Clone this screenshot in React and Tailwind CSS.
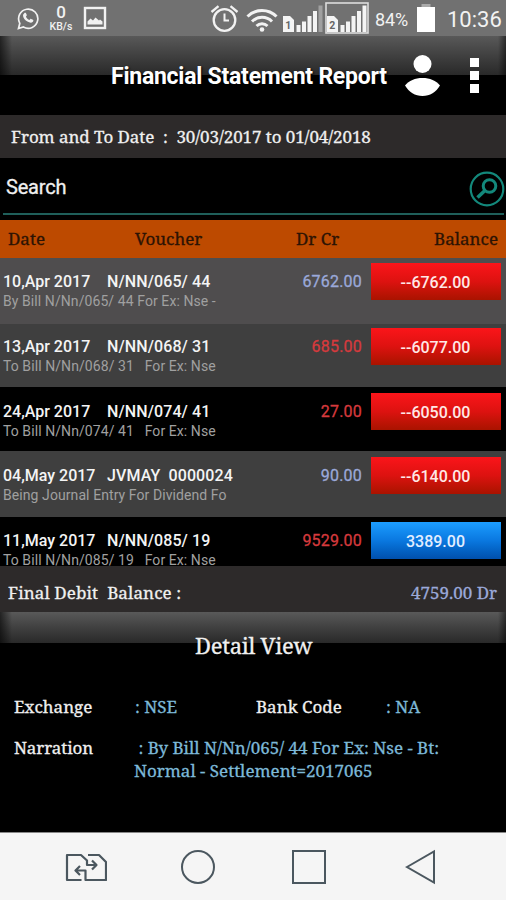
const serif = "font-['Noto_Serif','Droid_Serif','DejaVu_Serif_Condensed','DejaVu_Serif',serif] [-webkit-text-stroke:0.3px]"

const entries = [
  { date: '10,Apr 2017', voucher: 'N/NN/065/ 44', note: 'By Bill N/Nn/065/ 44 For Ex: Nse -', amount: '6762.00', credit: true, balance: '--6762.00', row: 'h-[66px] pt-[5px] bg-[#4f4d4e]' },
  { date: '13,Apr 2017', voucher: 'N/NN/068/ 31', note: 'To Bill N/Nn/068/ 31   For Ex: Nse', amount: '685.00', credit: false, balance: '--6077.00', row: 'h-[63px] pt-1 bg-[#3f3f3f]' },
  { date: '24,Apr 2017', voucher: 'N/NN/074/ 41', note: 'To Bill N/Nn/074/ 41   For Ex: Nse', amount: '27.00', credit: false, balance: '--6050.00', row: 'h-16 pt-[6px] bg-black' },
  { date: '04,May 2017', voucher: 'JVMAY  0000024', note: 'Being Journal Entry For Dividend Fo', amount: '90.00', credit: true, balance: '--6140.00', row: 'h-[66px] pt-[6px] bg-[#3f3f3f]' },
  { date: '11,May 2017', voucher: 'N/NN/085/ 19', note: 'To Bill N/Nn/085/ 19   For Ex: Nse', amount: '9529.00', credit: false, balance: '3389.00', positive: true, row: 'h-[49px] pt-[5px] bg-black' },
]

function SimSignal({ sim, boxed }) {
  return (
    <svg className="shrink-0" width="44" height="32" viewBox="0 0 44 32">
      {boxed && <rect x="1" y="1" width="42" height="30" fill="none" stroke="#ddd" strokeWidth="1.6" />}
      <path d="M2 14h7l4 4v12H2z" fill="#f4f4f4" />
      <text x="7.200" y="26.5" textAnchor="middle" fontSize="10.5" fontWeight="700" fill="#666" fontFamily="Roboto">{sim}</text>
      <path d="M15.500 23h4v7h-4zM21 19.500h4V30h-4zM26.500 14h4v16h-4zM32 9h4v21h-4z" fill="#f4f4f4" />
      <path d="M37.500 3.500h4V30h-4z" fill={boxed ? '#f4f4f4' : '#a0a0a0'} />
    </svg>
  )
}

function StatusBar() {
  return (
    <div className="h-9 bg-[#717171] flex items-center text-[#f2f2f2] shrink-0">
      <svg className="ml-[17px] shrink-0" width="23" height="23" viewBox="0 0 23 23">
        <path d="M1.500 21.500l1.300-5.200a9.600 9.600 0 1 1 3.600 3.700z" fill="none" stroke="currentColor" strokeWidth="1.700" />
        <path d="M7.200 6.200c.5-.6 1.500-.6 1.800 0l.8 1.900c.1.500-.5 1.200-.9 1.600.8 1.600 1.900 2.600 3.600 3.400.6-.7 1-1.400 1.600-1.200l1.900.9c.7.400.3 1.700-.4 2.300-1.300 1-3.200.6-5.200-.5-2.300-1.300-3.900-3.400-4.300-5.300-.2-1.300.2-2.300 1.100-3.100z" fill="currentColor" />
      </svg>
      <div className="ml-[9px] w-6 flex flex-col items-center font-['Roboto',sans-serif]">
        <span className="text-[17px] leading-[19px] font-medium -mb-[1px]">0</span>
        <span className="text-[10.5px] leading-[12px] font-medium">KB/s</span>
      </div>
      <svg className="ml-[10px] shrink-0" width="24" height="24" viewBox="0 0 24 24">
        <rect x="2" y="2" width="20" height="20" fill="none" stroke="currentColor" strokeWidth="2.400" />
        <path d="M4.500 18.500v-3l3-3 2.500 2 2.500-3 3.500 3 1-1 2.500 2v3z" fill="currentColor" />
      </svg>
      <svg className="ml-[103px] shrink-0" width="29" height="30" viewBox="0 0 29 30">
        <g fill="none" stroke="currentColor" strokeWidth="2.300">
          <circle cx="14.500" cy="17" r="10.800" />
          <path d="M14.500 10.500V17.500H19" strokeWidth="2" />
          <path d="M1.500 9L8.500 3.200M27.500 9L20.500 3.200" />
        </g>
      </svg>
      <svg className="ml-[7px] mt-[3px] shrink-0" width="32" height="26" viewBox="0 0 32 26">
        <g fill="none" stroke="currentColor" strokeWidth="3">
          <path d="M1.500 9.500a20.500 20.500 0 0 1 29 0" />
          <path d="M6 14.500a14 14 0 0 1 20 0" />
          <path d="M10.500 19a8 8 0 0 1 11 0" />
        </g>
        <circle cx="16" cy="22.500" r="2.300" fill="currentColor" />
      </svg>
      <div className="ml-[3px]"><SimSignal sim="1" /></div>
      <div><SimSignal sim="2" boxed /></div>
      <span className="ml-[6px] mt-[3px] w-[36px] whitespace-nowrap font-['Roboto',sans-serif] text-[18px] leading-6 tracking-[-0.1px]">84%</span>
      <svg className="ml-[6px] shrink-0" width="18" height="28" viewBox="0 0 18 28">
        <path d="M4.500 0h9v3h-9z" fill="#aaa" />
        <path d="M0 3h18v25H0z" fill="#fff" />
      </svg>
      <span className="ml-3 mt-[3px] whitespace-nowrap font-['Roboto',sans-serif] text-[22px] leading-6">10:36</span>
    </div>
  )
}

function Glow({ className }) {
  return (
    <div className={`flex bg-gradient-to-b from-[#595959] to-[#292929] ${className}`}>
      <div className="w-3 bg-gradient-to-r from-black/60 to-transparent" />
      <div className="flex-1" />
      <div className="w-2 bg-gradient-to-r from-transparent to-black/50" />
    </div>
  )
}

function TitleBar() {
  return (
    <div className="h-[79px] shrink-0 grid bg-black">
      <Glow className="col-start-1 row-start-1 h-[39px]" />
      <div className="col-start-1 row-start-1 flex items-start pt-[17px] text-white">
        <h1 className="ml-[111px] mt-[10px] w-[277px] whitespace-nowrap font-['Roboto',sans-serif] text-[23px] leading-7 font-bold tracking-[-0.24px] [text-shadow:1px_1px_2px_#000]">Financial Statement Report</h1>
        <svg className="ml-[17px] shrink-0" width="35" height="44" viewBox="0 0 35 44">
          <circle cx="17.500" cy="11" r="9" fill="#fff" />
          <path d="M0 32.500c4-5 10-7.500 17.500-7.500S31 27.500 35 32.500C31 39 25 43 17.500 43S4 39 0 32.500z" fill="#fff" />
        </svg>
        <div className="ml-[30px] mt-[5px] flex flex-col gap-[4px]">
          <div className="size-[9px] bg-white" />
          <div className="size-[9px] bg-white" />
          <div className="size-[9px] bg-white" />
        </div>
      </div>
    </div>
  )
}

function SearchBar() {
  return (
    <div className="h-[62px] shrink-0 bg-black pl-[3px] pr-[2px]">
      <div className="h-[57px] border-b-2 border-[#1f5f5a] flex items-start">
        <span className="flex-1 pl-[3px] pt-[15px] font-['Roboto',sans-serif] text-[20px] leading-7 tracking-[-0.2px] text-[#f0f0f0] [-webkit-text-stroke:0.3px]">Search</span>
        <svg className="mt-[13px] -mr-px" width="36" height="36" viewBox="0 0 36 36" fill="none" stroke="#13887b">
          <circle cx="18" cy="18" r="16.300" strokeWidth="2.200" />
          <circle cx="20.500" cy="15" r="6.300" strokeWidth="3" />
          <path d="M16 19.500L8.500 26.500" strokeWidth="3.600" />
        </svg>
      </div>
    </div>
  )
}

function Entry({ entry }) {
  return (
    <div className={`flex shrink-0 items-start overflow-hidden pl-[3px] font-['Roboto',sans-serif] ${entry.row}`}>
      <div className="w-[260px] pt-[9px] whitespace-pre">
        <div className="flex text-[16px] leading-5 font-medium text-[#f4f4f4]">
          <span className="w-[104px]">{entry.date}</span>
          <span className="tracking-[0.1px]">{entry.voucher}</span>
        </div>
        <div className="text-[14px] leading-[19px] tracking-[0.08px] text-[#a0a0a0]">{entry.note}</div>
      </div>
      <div className={`w-[99px] pt-[9px] text-right text-[16px] leading-5 tracking-[0.2px] [-webkit-text-stroke:0.3px] ${entry.credit ? 'text-[#9ba9da]' : 'text-[#d63a3d]'}`}>{entry.amount}</div>
      <div className={`ml-[9px] w-[130px] h-[37px] pt-[10px] pr-px text-center text-[16px] leading-5 font-medium ${entry.positive ? 'bg-gradient-to-b from-[#1c9dff] via-[#0a78e0] to-[#0150ad] text-[#e3eeff]' : 'bg-gradient-to-b from-[#fb151a] via-[#dd1210] to-[#a91300] text-[#ffe8e6]'}`}>{entry.balance}</div>
    </div>
  )
}

function DetailView() {
  return (
    <div className="h-[220px] shrink-0 grid bg-black">
      <Glow className="col-start-1 row-start-1 h-[31px]" />
      <div className={`col-start-1 row-start-1 text-[17px] ${serif}`}>
        <h2 className="pt-[19px] pl-[195px] text-[22px] leading-7 tracking-[-0.27px] text-[#f0f0f0] whitespace-nowrap">Detail View</h2>
        <div className="mt-[36px] pl-[14px] flex leading-6 text-[#f0f0f0] whitespace-nowrap">
          <span className="w-[121px]">Exchange</span>
          <span className="w-[121px] text-[#7db9d8]">: NSE</span>
          <span className="w-[130px]">Bank Code</span>
          <span className="text-[#7db9d8]">: NA</span>
        </div>
        <div className="mt-[17px] pl-[14px] flex leading-[23px] whitespace-pre">
          <span className="w-[120px] tracking-[-0.1px] text-[#f0f0f0]">Narration</span>
          <span className="text-[#7db9d8]">{' : By Bill N/Nn/065/ 44 For Ex: Nse - Bt:\nNormal - Settlement=2017065'}</span>
        </div>
      </div>
    </div>
  )
}

function NavBar() {
  return (
    <div className="h-[68px] shrink-0 bg-[#f5f5f5] border-t border-[#888] flex items-center text-[#4b575f]">
      <svg className="ml-[65px]" width="42" height="34" viewBox="0 0 42 34" fill="none" stroke="currentColor" strokeWidth="2.200" strokeLinejoin="round">
        <path d="M16.500 30H2V5h14l6 5.500V15h9M27 10.500l4.500 4.500-4.500 4.500" />
        <path d="M23 5h11l7 7v18H20.500V20.500H10.500M15 16l-4.500 4.500L15 25" />
      </svg>
      <svg className="ml-[73px]" width="36" height="36" viewBox="0 0 36 36" fill="none" stroke="currentColor" strokeWidth="2">
        <circle cx="18" cy="18" r="16" />
      </svg>
      <svg className="ml-[75px]" width="36" height="36" viewBox="0 0 36 36" fill="none" stroke="currentColor" strokeWidth="2">
        <rect x="2" y="2" width="32" height="32" />
      </svg>
      <svg className="ml-[78px]" width="32" height="36" viewBox="0 0 32 36" fill="none" stroke="currentColor" strokeWidth="2">
        <path d="M2 18L29 2.500V33.500z" />
      </svg>
    </div>
  )
}

function App() {
  return (
    <div className="w-[506px] h-[900px] flex flex-col overflow-hidden bg-black">
      <StatusBar />
      <TitleBar />
      <div className={`h-[43px] shrink-0 bg-[#2d2a2a] pl-[11px] pt-[10px] text-[17px] leading-6 tracking-[-0.08px] text-[#f0f0f0] whitespace-pre ${serif}`}>From and To Date  :  30/03/2017 to 01/04/2018</div>
      <SearchBar />
      <div className={`h-[38px] shrink-0 bg-[#bd4a00] flex pl-2 pt-[7px] text-[17px] leading-6 text-[#2c1304] ${serif}`}>
        <span className="w-[127px]">Date</span>
        <span className="w-[161px]">Voucher</span>
        <span className="flex-1">Dr Cr</span>
        <span className="pr-2">Balance</span>
      </div>
      {entries.map(entry => (
        <Entry key={entry.date} entry={entry} />
      ))}
      <div className={`h-[46px] shrink-0 bg-[#2d2a2a] flex justify-between pl-2 pr-[9px] pt-[15px] text-[17px] leading-6 whitespace-pre ${serif}`}>
        <span className="tracking-[0.1px] text-[#f0f0f0]">Final Debit  Balance :</span>
        <span className="text-[#9ba9da]">4759.00 Dr</span>
      </div>
      <DetailView />
      <NavBar />
    </div>
  )
}

export default App
